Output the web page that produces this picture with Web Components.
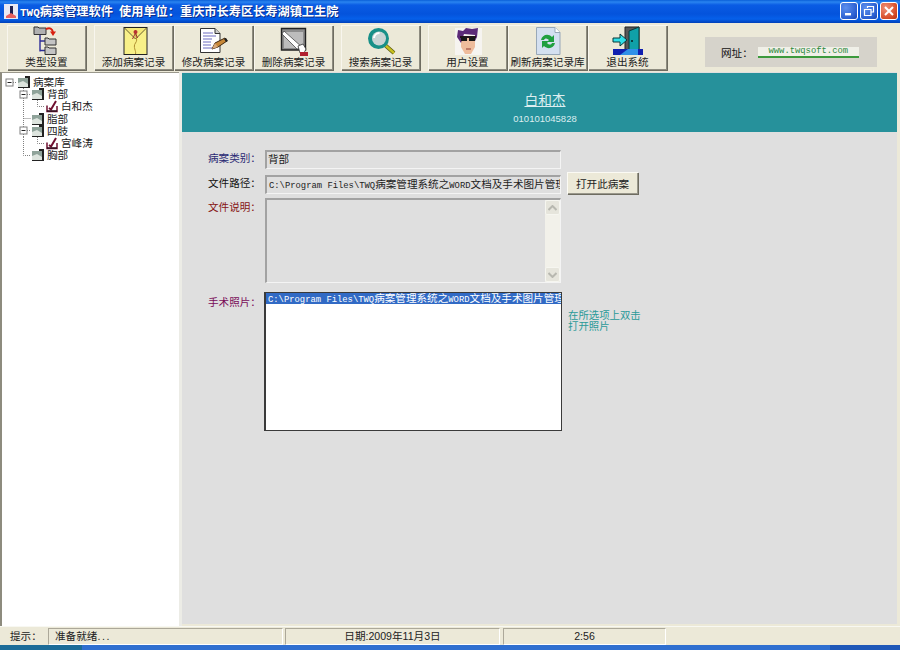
<!DOCTYPE html>
<html lang="zh">
<head>
<meta charset="utf-8">
<title>TWQ病案管理软件</title>
<style>
    html, body { margin: 0; height: 100%; overflow: hidden; background: #ece9d8; }
    body { font: 10.6px "Liberation Sans", "Noto Sans CJK SC", sans-serif; color: #222; }
</style>
</head>
<body>
<app-shell>
    <win-titlebar slot="title"><span style="font:bold 11px 'Liberation Mono',monospace">TWQ</span>病案管理软件&nbsp;&nbsp;使用单位：重庆市长寿区长寿湖镇卫生院</win-titlebar>

    <tool-bar slot="tools">
        <tool-button label="类型设置">
            <svg viewBox="0 0 32 32" width="32" height="32">
                <path d="M9 9V26.5M9 16H14M9 25.5H14" fill="none" stroke="#2c2c98" stroke-width="1.4"/>
                <path d="M3 2h4l1 1h7v6.5H3z" fill="#b0b0b0" stroke="#333"/>
                <path d="M14 13h3l1 1h7v6H14z" fill="#c4c4c4" stroke="#333"/>
                <path d="M14 22h3l1 1h7v6.5H14z" fill="#c4c4c4" stroke="#333"/>
                <path d="M15 4c4-1.5 6-.5 7 3" fill="none" stroke="#d82010" stroke-width="2"/>
                <path d="M19 6.5l6 0-3 4.5z" fill="#d82010"/>
            </svg>
        </tool-button>
        <tool-button label="添加病案记录" gap>
            <svg viewBox="0 0 32 32" width="32" height="32">
                <rect x="6" y="2.5" width="23" height="27" fill="#f8f088" stroke="#222"/>
                <path d="M6.5 3L17.5 14 28.5 3" fill="#f4e878" stroke="#6a6030"/>
                <path d="M17.5 5c-1 6 3 9 0 13s1 8 0 11" fill="none" stroke="#b09030"/>
                <circle cx="17.5" cy="7" r="2" fill="#b83030"/>
                <path d="M17.5 8l-3 6M17.5 8l2 5" stroke="#a03030" fill="none"/>
            </svg>
        </tool-button>
        <tool-button label="修改病案记录">
            <svg viewBox="0 0 32 32" width="32" height="32">
                <path d="M2.5 3.5H17l5 5v19H2.5z" fill="#fff" stroke="#333"/>
                <path d="M17 3.5v5h5" fill="#ccc" stroke="#333"/>
                <path d="M5 8h10M5 11h13M5 14h9M5 17h8M5 20h8M5 23h10" stroke="#6c6cc0"/>
                <path d="M14 24l3-6 10-5 2 3-9 6z" fill="#c88838" stroke="#402810"/>
                <path d="M14 24l3-6 3 4z" fill="#d8a878"/>
                <path d="M26 14l2-1 2 3-2 1z" fill="#222"/>
            </svg>
        </tool-button>
        <tool-button label="删除病案记录">
            <svg viewBox="0 0 32 32" width="32" height="32">
                <path d="M3.5 3.5H27.5V25H3.5z" fill="#8c8c8c" stroke="#222" stroke-width="1.4"/>
                <path d="M6 7H25V23H6z" fill="#bcbcbc"/>
                <path d="M6 6L25 23 19 24 4 9z" fill="#fff" stroke="#333" stroke-width=".7"/>
                <path d="M20 21l5-2 3 5-2 4h-4z" fill="#fff" stroke="#333" stroke-width=".8"/>
                <rect x="22" y="27" width="8" height="4" fill="#b02030"/>
            </svg>
        </tool-button>
        <tool-button label="搜索病案记录" gap>
            <svg viewBox="0 0 32 32" width="32" height="32">
                <path d="M20 20l9 8" stroke="#5a5a10" stroke-width="4"/>
                <path d="M20 20l9 8" stroke="#c8c020" stroke-width="2.4"/>
                <circle cx="13.5" cy="13.5" r="10.5" fill="#189088"/>
                <circle cx="14" cy="13.5" r="7" fill="#c8d4d4"/>
                <path d="M9 13a5.5 5.5 0 0 1 5.5-5" stroke="#fff" stroke-width="2" fill="none"/>
            </svg>
        </tool-button>
        <tool-button label="用户设置" gap>
            <svg viewBox="0 0 32 32" width="32" height="32">
                <rect x="3" y="3" width="27" height="27" fill="#f6f4f0"/>
                <path d="M9 11h14v11l-4 7h-6l-4-7z" fill="#eebc9c"/>
                <path d="M5 12L6 5l5 1 3-3 6 1 6-1-1 9-2 4V10L12 9 9 18z" fill="#5c2a78"/>
                <path d="M8 11h16v2H8z" fill="#24121c"/>
                <path d="M9 12h6v4H9zM17 12h6v4h-6z" fill="#181818"/>
                <path d="M14 24h5" stroke="#903830"/>
            </svg>
        </tool-button>
        <tool-button label="刷新病案记录库">
            <svg viewBox="0 0 32 32" width="32" height="32">
                <path d="M4.5 2.5H23l5 5v22H4.5z" fill="#d4e0f0" stroke="#98a8b8"/>
                <path d="M23 2.5v5h5" fill="#fff" stroke="#98a8b8"/>
                <path d="M9 15c1-5 7-7 11-3l2-2v7h-7l2-2c-2-2-4-2-5 0z" fill="#20a040"/>
                <path d="M23 18c-1 5-7 7-11 3l-2 2v-7h7l-2 2c2 2 4 2 5 0z" fill="#20a040"/>
            </svg>
        </tool-button>
        <tool-button label="退出系统">
            <svg viewBox="0 0 32 32" width="32" height="32">
                <path d="M13 2h14v24H13z" fill="#585858" stroke="#222"/>
                <path d="M17 6l10-4v25l-10 2z" fill="#10a0a8" stroke="#083838"/>
                <circle cx="20" cy="16" r="1" fill="#062020"/>
                <path d="M1 13h7V9l7 6-7 6v-4H1z" fill="#30e0e8" stroke="#083838"/>
                <path d="M1 24h30v6H1z" fill="#1020b0"/>
                <path d="M8 30l8-6 10 0v6z" fill="#3090e8"/>
            </svg>
        </tool-button>
    </tool-bar>

    <case-tree slot="tree">
        <tree-row guides="e" label="病案库"></tree-row>
        <tree-row guides=" E" label="背部"></tree-row>
        <tree-row guides=" |L" label="白和杰" kind="record"></tree-row>
        <tree-row guides=" T" label="脂部"></tree-row>
        <tree-row guides=" E" label="四肢"></tree-row>
        <tree-row guides=" |L" label="宫峰涛" kind="record"></tree-row>
        <tree-row guides=" L" label="胸部"></tree-row>
    </case-tree>

    <case-header slot="header" name="白和杰" code="010101045828"></case-header>
    <case-form slot="form"></case-form>

    <status-bar slot="status"></status-bar>
</app-shell>

<script>
    class AppShell extends HTMLElement {
        constructor() {
            super();
            this.attachShadow({ mode: 'open' });
            this.shadowRoot.innerHTML = `
                <style>
                    :host { display: flex; flex-direction: column; width: 900px; height: 650px; background: #ece9d8; }
                    .main { display: flex; height: 554px; flex: none; }
                    .left { display: block; width: 179px; flex: none; border-left: 2px solid #8d8b7e; border-top: 1px solid #9a988c; box-sizing: border-box; padding-left: 1px; background: #fff; }
                    .split { width: 3px; flex: none; background: #ecece6; }
                    .right { width: 715px; flex: none; background: #dfdfdf; box-sizing: border-box; margin-bottom: 2px; }
                    .taskbar { flex: none; height: 5px; background: linear-gradient(90deg, #1c6c98 0 82px, #2f6fd0 82px 830px, #1f58b8 830px); }
                </style>
                <slot name="title"></slot>
                <slot name="tools"></slot>
                <div class="main">
                    <div class="left"><slot name="tree"></slot></div>
                    <div class="split"></div>
                    <div class="right">
                        <slot name="header"></slot>
                        <slot name="form"></slot>
                    </div>
                </div>
                <slot name="status"></slot>
                <div class="taskbar"></div>
            `;
        }
    }

    class WinTitlebar extends HTMLElement {
        constructor() {
            super();
            this.attachShadow({ mode: 'open' });
            this.shadowRoot.innerHTML = `
                <style>
                    :host { display: flex; align-items: center; height: 23px; box-sizing: border-box; padding: 0 2px 1px 4px;
                        background: linear-gradient(180deg, #0a5fd8 0, #2a84f0 2px, #0a5ce4 5px, #0453dc 14px, #0660ea 19px, #0040b8 23px); }
                    .logo { flex: none; margin-right: 2px; }
                    .text { flex: 1; color: #fff; font: bold 12.2px "Liberation Serif", "Noto Sans CJK SC", serif; white-space: nowrap; text-shadow: 1px 1px #0a2c88; }
                    .btn { flex: none; width: 18px; height: 18px; margin-left: 2px; box-sizing: border-box; border: 1px solid #fff; border-radius: 3px; display: flex; align-items: center; justify-content: center;
                        background: radial-gradient(circle at 30% 30%, #5c90ee, #2a5ed0 70%, #1c46b0); }
                    .close { background: radial-gradient(circle at 30% 30%, #f09078, #d8502c 65%, #b83010); margin-right: 0; }
                </style>
                <svg class="logo" width="14" height="15" viewBox="0 0 14 15">
                    <rect width="14" height="15" fill="#e8e8f4"/>
                    <path d="M6 2h3v8l-3 2z" fill="#202050"/>
                    <path d="M2 12l5-3 5 3v2H2z" fill="#e86060"/>
                </svg>
                <div class="text"><slot></slot></div>
                <div class="btn"><svg width="12" height="12" viewBox="0 0 12 12"><rect x="2" y="8" width="6" height="2.4" fill="#fff"/></svg></div>
                <div class="btn"><svg width="12" height="12" viewBox="0 0 12 12"><path d="M4.5 3V1.5H10.5V7H8.5M1.5 4.5H8V10.5H1.5z" fill="none" stroke="#fff" stroke-width="1.2"/></svg></div>
                <div class="btn close"><svg width="12" height="12" viewBox="0 0 12 12"><path d="M2 2l8 8M10 2l-8 8" stroke="#fff" stroke-width="2"/></svg></div>
            `;
        }
    }

    class ToolBar extends HTMLElement {
        constructor() {
            super();
            this.attachShadow({ mode: 'open' });
            this.shadowRoot.innerHTML = `
                <style>
                    :host { display: flex; align-items: flex-start; height: 49px; box-sizing: border-box; padding: 2px 23px 0 7px; background: #ece9d8; }
                    .group { display: flex; gap: 1px; flex: none; }
                    .site { margin: 12px 0 0 auto; width: 172px; height: 30px; box-sizing: border-box; padding-left: 16px; display: flex; align-items: center; background: #d6d3cb; color: #111; font-size: 10.6px; }
                    .url { margin-left: 5px; width: 101px; height: 11px; box-sizing: border-box; background: #f0f0e8; border-bottom: 2px solid #3c9a3c; color: #2c8a3c; font: 8.85px/9px "Liberation Mono", monospace; text-align: center; }
                </style>
                <div class="group"><slot></slot></div>
                <div class="site"><span>网址：</span><span class="url">www.twqsoft.com</span></div>
            `;
        }
    }

    class ToolButton extends HTMLElement {
        constructor() {
            super();
            this.attachShadow({ mode: 'open' });
            this.shadowRoot.innerHTML = `
                <style>
                    :host { display: flex; flex-direction: column; align-items: center; width: 79px; height: 45px; box-sizing: border-box; padding-top: 1px; background: #ece9d8;
                        box-shadow: inset 1px 1px #f8f6ee, inset -1px -1px #8e8c80, 1px 1px #6e6c60; font-size: 10.6px; color: #222; }
                    :host([gap]) { margin-left: 7px; }
                    .icon { height: 30px; display: flex; align-items: center; justify-content: center; }
                    .label { line-height: 13px; white-space: nowrap; }
                </style>
                <div class="icon"><slot></slot></div>
                <div class="label">${this.getAttribute('label')}</div>
            `;
        }
    }

    class CaseTree extends HTMLElement {
        constructor() {
            super();
            this.attachShadow({ mode: 'open' });
            this.shadowRoot.innerHTML = `
                <style>
                    :host { display: block; padding-top: 3px; height: 100%; box-sizing: border-box; }
                </style>
                <slot></slot>
            `;
        }
    }

    class TreeRow extends HTMLElement {
        cell(type) {
            const dot = 'stroke="#808080" stroke-dasharray="1 1" fill="none"';
            const parts = {
                ' ': '',
                '|': `<path d="M6.5 0V13" ${dot}/>`,
                'L': `<path d="M6.5 0V6.5H14" ${dot}/>`,
                'T': `<path d="M6.5 0V13M6.5 6.5H14" ${dot}/>`,
                'e': `<path d="M10 6.5H14" ${dot}/><rect x="3" y="3" width="7" height="7" fill="#fff" stroke="#808080"/><path d="M4.5 6.5H8.5" stroke="#222"/>`,
                'E': `<path d="M6.5 0V13M10 6.5H14" ${dot}/><rect x="3" y="3" width="7" height="7" fill="#fff" stroke="#808080"/><path d="M4.5 6.5H8.5" stroke="#222"/>`
            };
            return `<svg width="14" height="13" viewBox="0 0 14 13">${parts[type]}</svg>`;
        }

        constructor() {
            super();
            this.attachShadow({ mode: 'open' });
            const guides = (this.getAttribute('guides') || '').split('').map(g => this.cell(g)).join('');
            const folder = `
                <svg class="ico" width="12" height="12" viewBox="0 0 12 12">
                    <rect x="0" y="2" width="10" height="10" fill="#8fa39a"/>
                    <path d="M0 12V7L5 5l5 3v4z" fill="#dde4de"/>
                    <path d="M7 0h5v12H0v-1h10V2H7z" fill="#222"/>
                </svg>`;
            const record = `
                <svg class="ico" width="12" height="12" viewBox="0 0 12 12">
                    <path d="M1 5.5V11.5H11V6" fill="#fff" stroke="#701030" stroke-width="1.5"/>
                    <path d="M3 8l2 1.5L10 1" fill="none" stroke="#701030" stroke-width="2"/>
                    <path d="M1 11h10" stroke="#301020" stroke-width="1.5"/>
                </svg>`;
            this.shadowRoot.innerHTML = `
                <style>
                    :host { display: flex; align-items: center; height: 12.2px; font-size: 10.6px; color: #222; white-space: nowrap; }
                    svg { flex: none; display: block; overflow: visible; }
                    .ico { margin: 0 3px 0 1px; }
                    span { line-height: 12px; }
                </style>
                ${guides}
                ${this.getAttribute('kind') === 'record' ? record : folder}
                <span>${this.getAttribute('label')}</span>
            `;
        }
    }

    class CaseHeader extends HTMLElement {
        constructor() {
            super();
            this.attachShadow({ mode: 'open' });
            this.shadowRoot.innerHTML = `
                <style>
                    :host { display: flex; flex-direction: column; align-items: center; height: 59px; margin-top: 1px; box-sizing: border-box; padding: 19px 0 0 11px; background: #26919b; color: #dceef0; }
                    .name { font-size: 13.7px; line-height: 18px; text-decoration: underline; }
                    .code { font-size: 9.5px; line-height: 13px; margin-top: 2px; }
                </style>
                <div class="name">${this.getAttribute('name')}</div>
                <div class="code">${this.getAttribute('code')}</div>
            `;
        }
    }

    class FieldBox extends HTMLElement {
        constructor() {
            super();
            this.attachShadow({ mode: 'open' });
            this.shadowRoot.innerHTML = `
                <style>
                    :host { display: flex; box-sizing: border-box; width: 296px; overflow: hidden; white-space: nowrap; background: #dfdfdf;
                        border: 1px solid; border-width: 2px 1px 1px 2px; border-color: #a2a2a2 #f4f4f4 #f4f4f4 #a2a2a2; color: #222; line-height: 15px; padding-left: 1px; }
                    :host([dark]) { background: #fff; border: 2px solid #3a3a3a; border-top-width: 1px; border-right-width: 1px; border-bottom-width: 1px; padding: 0; display: block; }
                </style>
                <slot></slot>
            `;
        }
    }

    class FakeScrollbar extends HTMLElement {
        constructor() {
            super();
            this.attachShadow({ mode: 'open' });
            const arrow = d => `<div class="b"><svg width="9" height="6" viewBox="0 0 9 6"><path d="${d}" fill="none" stroke="#b8b8b0" stroke-width="2"/></svg></div>`;
            this.shadowRoot.innerHTML = `
                <style>
                    :host { display: flex; flex-direction: column; justify-content: space-between; width: 15px; height: 100%; margin-left: auto; background: #f2f1ea; }
                    .b { height: 15px; box-sizing: border-box; display: flex; align-items: center; justify-content: center; background: #e6e5dc; border: 1px solid #f6f6f0; border-radius: 2px; }
                </style>
                ${arrow('M.5 5L4.5 1l4 4')}
                ${arrow('M.5 1L4.5 5l4-4')}
            `;
        }
    }

    class CaseForm extends HTMLElement {
        constructor() {
            super();
            this.attachShadow({ mode: 'open' });
            const path = `<span class="m">C:\\Program Files\\TWQ</span>病案管理系统之<span class="m">WORD</span>文档及手术图片管理`;
            this.shadowRoot.innerHTML = `
                <style>
                    :host { display: grid; grid-template-columns: 57px 296px 1fr; grid-template-rows: 19px 19px 85px 139px; row-gap: 6px; padding: 18px 0 0 26px; align-items: start; font-size: 10.6px; }
                    .lbl { line-height: 14px; padding-top: 1px; white-space: nowrap; }
                    .m { font: 8.85px "Liberation Mono", monospace; }
                    .tall { height: 85px; margin-top: -2px; }
                    .list { height: 139px; width: 298px; margin: 1px 0 0 -1px; }
                    .sel { background: #316ac5; color: #fff; height: 11px; line-height: 11px; white-space: nowrap; overflow: hidden; padding-left: 2px; }
                    button { margin: -3px 0 0 6px; width: 71px; height: 22px; padding: 0; border: 0; background: #ece9d8; font: inherit; color: #222;
                        box-shadow: inset 1px 1px #fbfaf4, inset -1px -1px #9a988c, 1px 1px #6e6c60; }
                    .hint { color: #2a9a98; font-size: 10.4px; line-height: 11px; margin: 19px 0 0 7px; white-space: nowrap; }
                    .lbl3 { margin-top: -1px; }
                    .lbl4 { margin-top: 3px; }
                </style>
                <div class="lbl" style="color:#2a2a74">病案类别：</div>
                <field-box style="height:19px">背部</field-box>
                <div></div>

                <div class="lbl" style="color:#111">文件路径：</div>
                <field-box style="height:19px"><span style="padding-left:1px">${path}</span></field-box>
                <button>打开此病案</button>

                <div class="lbl lbl3" style="color:#861414">文件说明：</div>
                <field-box class="tall"><fake-scrollbar></fake-scrollbar></field-box>
                <div></div>

                <div class="lbl lbl4" style="color:#7a0c58">手术照片：</div>
                <field-box class="list" dark><div class="sel">${path}</div></field-box>
                <div class="hint">在所选项上双击<br>打开照片</div>
            `;
        }
    }

    class StatusBar extends HTMLElement {
        constructor() {
            super();
            this.attachShadow({ mode: 'open' });
            this.shadowRoot.innerHTML = `
                <style>
                    :host { display: flex; align-items: flex-end; height: 19px; box-sizing: border-box; padding-left: 10px; background: #ece9d8; font-size: 10.6px; color: #222; border-top: 1px solid #f8f8f2; }
                    .tip { width: 38px; line-height: 17px; flex: none; }
                    .p { height: 17px; line-height: 15px; box-sizing: border-box; margin-right: 2px; flex: none; border: 1px solid; border-color: #aca899 #fff #fff #aca899; }
                    .a { width: 235px; padding-left: 6px; }
                    .a span { letter-spacing: 1.6px; }
                    .b { width: 215px; text-align: center; }
                    .c { width: 163px; text-align: center; margin-left: 1px; }
                </style>
                <div class="tip">提示：</div>
                <div class="p a">准备就绪<span>...</span></div>
                <div class="p b">日期:2009年11月3日</div>
                <div class="p c">2:56</div>
            `;
        }
    }

    customElements.define('app-shell', AppShell);
    customElements.define('win-titlebar', WinTitlebar);
    customElements.define('tool-bar', ToolBar);
    customElements.define('tool-button', ToolButton);
    customElements.define('case-tree', CaseTree);
    customElements.define('tree-row', TreeRow);
    customElements.define('case-header', CaseHeader);
    customElements.define('field-box', FieldBox);
    customElements.define('fake-scrollbar', FakeScrollbar);
    customElements.define('case-form', CaseForm);
    customElements.define('status-bar', StatusBar);
</script>
</body>
</html>
